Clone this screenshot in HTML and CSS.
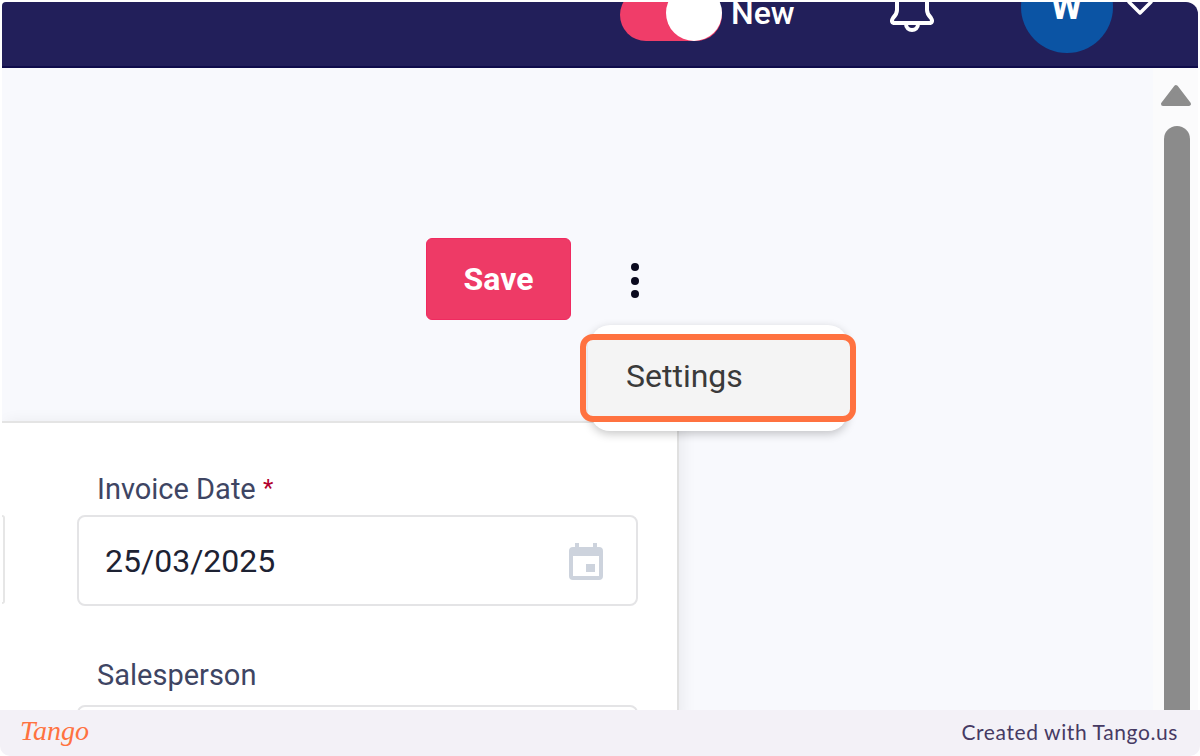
FILE: index.html
```html
<!DOCTYPE html>
<html lang="en">
<head>
    <meta charset="UTF-8">
    <meta name="viewport" content="width=device-width, initial-scale=1.0">
    <title>Invoice</title>
    <link rel="stylesheet" href="styles.css">
</head>
<body>
    <div class="window">
        <header class="topbar">
            <div class="toggle"><span class="knob"></span></div>
            <span class="new-label">New</span>
            <svg class="bell" width="44" height="36" viewBox="0 0 44 36" fill="none" stroke="#fff" stroke-width="4" stroke-linejoin="round" stroke-linecap="round">
                <path d="M7 -8V12C7 16 5 18 3 20C1 23 2 25 5 25H39C42 25 43 23 41 20C39 18 37 16 37 12V-8"/>
                <path d="M16 26C16 34 28 34 28 26"/>
            </svg>
            <div class="avatar">W</div>
            <svg class="chevron" width="26" height="18" viewBox="0 0 26 18" fill="none" stroke="#fff" stroke-width="3.5" stroke-linejoin="round" stroke-linecap="round">
                <path d="M2 3L13 14L24 3"/>
            </svg>
        </header>
        <div class="body-row">
            <main class="content">
                <div class="toolbar">
                    <button class="save-btn">Save</button>
                    <div class="more">
                        <div class="dots"><span></span><span></span><span></span></div>
                        <div class="menu">
                            <div class="menu-item">Settings</div>
                        </div>
                        <div class="highlight"></div>
                    </div>
                </div>
                <section class="card">
                    <div class="stub"></div>
                    <div class="fields">
                        <div class="field">
                            <label class="field-label">Invoice Date <span class="req">*</span></label>
                            <div class="input">
                                <span class="input-value">25/03/2025</span>
                                <svg class="cal" width="36" height="38" viewBox="0 0 36 38">
                                    <path fill="#cdd3dd" d="M7 1h4v4h14V1h4v4h2a4 4 0 0 1 4 4v25a4 4 0 0 1-4 4H5a4 4 0 0 1-4-4V9a4 4 0 0 1 4-4h2z"/>
                                    <rect x="5" y="14" width="26" height="20" fill="#fff"/>
                                    <rect x="18" y="22" width="9" height="8" fill="#cdd3dd"/>
                                </svg>
                            </div>
                        </div>
                        <div class="field">
                            <label class="field-label">Salesperson</label>
                            <div class="input"></div>
                        </div>
                    </div>
                </section>
            </main>
            <aside class="scrollbar">
                <svg class="arrow" width="32" height="24" viewBox="0 0 32 24">
                    <path fill="#8d8d8d" stroke="#8d8d8d" stroke-width="4" stroke-linejoin="round" d="M16 3L29 20H3z"/>
                </svg>
                <div class="thumb"></div>
            </aside>
        </div>
    </div>
    <footer class="footer">
        <span class="tango-logo">Tango</span>
        <span class="footer-text">Created with Tango.us</span>
    </footer>
</body>
</html>
```

FILE: styles.css
```css
html, body {
    margin: 0;
    height: 756px;
    overflow: hidden;
}
body {
    background: #fff;
    font-family: Roboto, Arial, sans-serif;
    display: flex;
    flex-direction: column;
}
.window {
    height: 708px;
    margin: 2px 2px 0 2px;
    overflow: hidden;
    display: flex;
    flex-direction: column;
}
.topbar {
    height: 64px;
    flex: none;
    background: #221f5a;
    border-bottom: 2px solid #0f0c4b;
    border-top-right-radius: 12px;
    border-top-left-radius: 4px;
    display: flex;
    align-items: flex-end;
    padding-left: 618px;
    overflow: hidden;
}
.toggle {
    width: 102px;
    height: 52px;
    flex: none;
    margin-bottom: 25px;
    border-radius: 26px;
    background: #f03d69;
    display: flex;
    justify-content: flex-end;
    align-items: flex-end;
}
.knob {
    width: 56px;
    height: 56px;
    flex: none;
    border-radius: 50%;
    background: #fff;
}
.new-label {
    flex: none;
    margin-left: 9px;
    margin-bottom: 37px;
    color: #fff;
    font-size: 32px;
    font-weight: 500;
    line-height: 32px;
}
.bell {
    flex: none;
    margin-left: 95px;
    margin-bottom: 32px;
    overflow: visible;
}
.avatar {
    width: 92px;
    height: 92px;
    flex: none;
    margin-left: 87px;
    margin-bottom: 13px;
    border-radius: 50%;
    background: #0b54a4;
    color: #fff;
    font-size: 36px;
    font-weight: 700;
    text-align: center;
    line-height: 92px;
}
.chevron {
    flex: none;
    margin-left: 14px;
    margin-bottom: 49px;
}
.body-row {
    flex: 1;
    min-height: 0;
    display: flex;
    background: #f8f9fd;
}
.content {
    flex: 1;
    min-width: 0;
}
.scrollbar {
    width: 45px;
    flex: none;
    background: #fbfbfc;
    display: flex;
    flex-direction: column;
    align-items: center;
    padding-top: 16px;
}
.arrow {
    flex: none;
}
.thumb {
    width: 26px;
    flex: 1;
    margin-top: 18px;
    margin-left: 3px;
    background: #8b8b8b;
    border-radius: 13px 13px 0 0;
}
.toolbar {
    height: 353px;
    box-sizing: border-box;
    padding: 170px 0 0 424px;
    display: flex;
    align-items: flex-start;
}
.save-btn {
    width: 145px;
    height: 82px;
    border: 1px solid #f02a60;
    border-radius: 6px;
    background: #ee3a66;
    color: #fff;
    font-family: Roboto, Arial, sans-serif;
    font-size: 32px;
    font-weight: 700;
}
.more {
    position: relative;
    margin-left: 57px;
    margin-top: 25px;
}
.dots {
    display: flex;
    flex-direction: column;
    gap: 5.5px;
    width: 14px;
    align-items: center;
}
.dots span {
    width: 8px;
    height: 8px;
    border-radius: 50%;
    background: #0a0a1e;
}
.menu {
    position: absolute;
    left: -38px;
    top: 62px;
    width: 258px;
    height: 106px;
    box-sizing: border-box;
    padding-top: 15px;
    background: #fff;
    border-radius: 20px;
    box-shadow: 0 3px 10px rgba(0, 0, 0, 0.22);
}
.menu-item {
    margin-left: -2px;
    width: 262px;
    height: 76px;
    box-sizing: border-box;
    padding-left: 38px;
    background: #f4f4f4;
    color: #3a3a3a;
    font-size: 32px;
    line-height: 72px;
}
.highlight {
    position: absolute;
    left: -48px;
    top: 71px;
    width: 276px;
    height: 88px;
    box-sizing: border-box;
    border: 6px solid #ff7240;
    border-radius: 13px;
}
.card {
    width: 677px;
    height: 300px;
    box-sizing: border-box;
    background: #fff;
    border-top: 2px solid #e4e4e4;
    border-right: 2px solid #e0e0e0;
    box-shadow: 4px 0 14px rgba(0, 0, 0, 0.06);
    display: flex;
    align-items: flex-start;
}
.stub {
    width: 1px;
    height: 85px;
    flex: none;
    margin-top: 92px;
    border: 2px solid #e6e6e6;
    border-left: none;
    border-radius: 0 6px 6px 0;
}
.fields {
    margin-left: 72px;
    width: 561px;
    padding-top: 47px;
    display: flex;
    flex-direction: column;
    gap: 51px;
}
.field-label {
    display: block;
    margin-left: 20px;
    height: 45px;
    color: #3e4563;
    font-size: 29px;
    line-height: 36px;
}
.field + .field .input {
    margin-top: 3px;
}
.req {
    color: #b2002d;
    font-size: 24px;
    vertical-align: 3px;
}
.input {
    height: 91px;
    box-sizing: border-box;
    border: 2px solid #e4e4e6;
    border-radius: 8px;
    padding: 0 32px 0 26px;
    display: flex;
    align-items: center;
    justify-content: space-between;
}
.input-value {
    color: #1d2233;
    font-size: 32px;
}
.footer {
    height: 46px;
    flex: none;
    background: #f3f1f7;
    border-radius: 0 0 10px 10px;
    display: flex;
    align-items: center;
    justify-content: space-between;
    padding: 0 22px 0 20px;
}
.tango-logo {
    color: #ff7240;
    font-family: "Liberation Serif", serif;
    font-style: italic;
    font-size: 28px;
    margin-bottom: 4px;
}
.footer-text {
    color: #463a63;
    font-family: Lato, sans-serif;
    font-size: 21px;
    letter-spacing: 0.6px;
    margin-bottom: 4px;
}
```
